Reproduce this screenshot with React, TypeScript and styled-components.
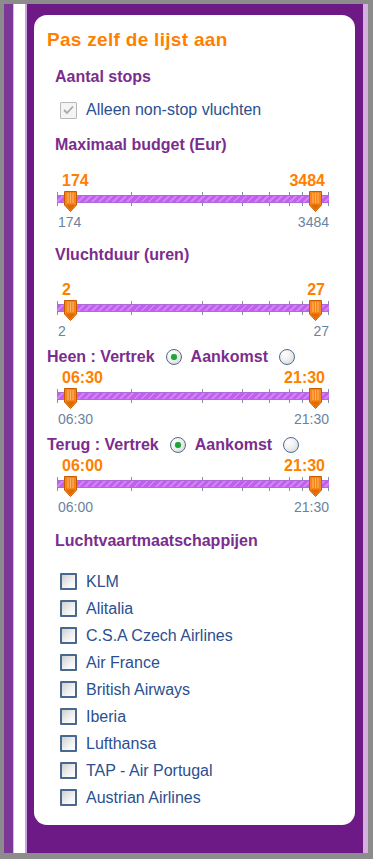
import React from "react";
import styled, { createGlobalStyle } from "styled-components";

const GlobalStyle = createGlobalStyle`
  html, body { margin: 0; padding: 0; background: #8c8c8c; }
  body { font-family: "Liberation Sans", Arial, sans-serif; }
  * { box-sizing: border-box; }
`;

const Frame = styled.div`
  display: flex;
  height: 849px;
  margin: 4px 5px 0 4px;
`;

const Rail = styled.div<{ $w: number; $c: string }>`
  flex: 0 0 ${(p) => p.$w}px;
  background: ${(p) => p.$c};
`;

const Main = styled.div`
  flex: 1;
  display: flex;
  flex-direction: column;
  background: #6e1a86;
  padding: 11px 8px 28px 7px;
`;

const Card = styled.div`
  flex: 1;
  display: flex;
  flex-direction: column;
  background: #ffffff;
  border-radius: 13px;
  padding-top: 15px;
`;

const Title = styled.h2`
  margin: 0 0 0 13px;
  font-size: 19px;
  line-height: 20px;
  font-weight: bold;
  letter-spacing: 0.3px;
  color: #ff7f00;
`;

const SectionTitle = styled.h3<{ $mt: number }>`
  margin: ${(p) => p.$mt}px 0 0 21px;
  font-size: 16px;
  line-height: 18px;
  font-weight: bold;
  color: #7b2d8e;
`;

const CheckRow = styled.label<{ $mt: number }>`
  display: flex;
  align-items: center;
  gap: 9px;
  height: 18px;
  margin: ${(p) => p.$mt}px 0 0 26px;
  font-size: 16px;
  color: #2b4f91;
`;

const Box = styled.span<{ $disabled?: boolean }>`
  flex: 0 0 17px;
  width: 17px;
  height: 17px;
  display: flex;
  align-items: center;
  justify-content: center;
  border: ${(p) => (p.$disabled ? "1px solid #b9b9b9" : "2px solid #48698d")};
  border-radius: 1px;
  background: ${(p) =>
    p.$disabled ? "#f4f4f4" : "linear-gradient(135deg, #cfcfcf 0%, #f2f2f2 60%, #ffffff 100%)"};
`;

const SliderBox = styled.div<{ $mt: number }>`
  margin: ${(p) => p.$mt}px 0 0 23px;
  width: 272px;
`;

const ValueRow = styled.div`
  display: flex;
  justify-content: space-between;
  height: 16px;
  line-height: 16px;
  padding: 0 4px 0 5px;
  font-size: 16px;
  font-weight: bold;
  color: #ff7f00;
`;

const TrackArea = styled.div`
  position: relative;
  height: 20px;
  padding-top: 6px;
`;

const Track = styled.div`
  position: relative;
  z-index: 1;
  height: 8px;
  background: repeating-linear-gradient(
    135deg,
    #c25ff1 0px,
    #c25ff1 3px,
    #d183f6 3px,
    #d183f6 5px
  );
  border-top: 1px solid #b06ad8;
  border-bottom: 1px solid #b06ad8;
`;

const Tick = styled.span<{ $left: number }>`
  position: absolute;
  top: 3px;
  left: ${(p) => p.$left}px;
  width: 1px;
  height: 14px;
  background: #7f90a4;
`;

const Handle = styled.svg<{ $left: number }>`
  position: absolute;
  z-index: 2;
  top: 2px;
  left: ${(p) => p.$left}px;
`;

const LimitRow = styled.div`
  display: flex;
  justify-content: space-between;
  margin-top: 6px;
  height: 14px;
  line-height: 14px;
  padding-left: 1px;
  font-size: 14px;
  color: #6a83a0;
`;

const RadioRow = styled.div<{ $mt: number }>`
  display: flex;
  align-items: center;
  height: 18px;
  margin: ${(p) => p.$mt}px 0 0 ${(p) => 13}px;
  font-size: 16px;
  font-weight: bold;
  color: #7b2d8e;
`;

const Radio = styled.span<{ $checked?: boolean }>`
  width: 16px;
  height: 16px;
  margin: 0 9px 0 11px;
  border-radius: 50%;
  border: 1.5px solid #4f6d8c;
  background: radial-gradient(circle at 35% 30%, #ffffff 0%, #f0f0f0 45%, #cfcfcf 100%);
  display: inline-flex;
  align-items: center;
  justify-content: center;
  &::after {
    content: "";
    display: ${(p) => (p.$checked ? "block" : "none")};
    width: 6px;
    height: 6px;
    border-radius: 50%;
    background: #22a33a;
    box-shadow: 0 0 1px #5ed26c;
  }
`;

const AirlineList = styled.ul`
  margin: 18px 0 0 26px;
  padding: 0;
  list-style: none;
`;

const Airline = styled.li`
  display: flex;
  align-items: center;
  gap: 9px;
  height: 27px;
  font-size: 16px;
  color: #2b4f91;
`;

const TICKS = [0, 74, 145, 185, 212, 232, 245, 271];

const HandleShape: React.FC<{ left: number }> = ({ left }) => (
  <Handle $left={left} width="13" height="21" viewBox="0 0 13 21">
    <path d="M0.5 0.5 H12.5 V14 L6.5 20.5 L0.5 14 Z" fill="#f5861c" stroke="#c65a00" strokeWidth="1" />
    <path d="M1.5 13.5 L6.5 19 L11.5 13.5 Z" fill="#e06a00" />
    <rect x="3.5" y="2" width="1" height="10" fill="#ffb36a" />
    <rect x="6" y="2" width="1" height="10" fill="#ffb36a" />
    <rect x="8.5" y="2" width="1" height="10" fill="#ffb36a" />
  </Handle>
);

const RangeSlider: React.FC<{ mt: number; lo: string; hi: string }> = ({ mt, lo, hi }) => (
  <SliderBox $mt={mt}>
    <ValueRow>
      <span>{lo}</span>
      <span>{hi}</span>
    </ValueRow>
    <TrackArea>
      {TICKS.map((t) => (
        <Tick key={t} $left={t} />
      ))}
      <Track />
      <HandleShape left={7} />
      <HandleShape left={252} />
    </TrackArea>
    <LimitRow>
      <span>{lo}</span>
      <span>{hi}</span>
    </LimitRow>
  </SliderBox>
);

const AIRLINES = [
  "KLM",
  "Alitalia",
  "C.S.A Czech Airlines",
  "Air France",
  "British Airways",
  "Iberia",
  "Lufthansa",
  "TAP - Air Portugal",
  "Austrian Airlines",
];

export default function App() {
  return (
    <>
      <GlobalStyle />
      <Frame>
        <Rail $w={9} $c="#7c3896" />
        <Rail $w={1} $c="#dcb6e4" />
        <Rail $w={11} $c="#ffffff" />
        <Rail $w={2} $c="#c8a4d8" />
        <Main>
          <Card>
            <Title>Pas zelf de lijst aan</Title>
            <SectionTitle $mt={18}>Aantal stops</SectionTitle>
            <CheckRow $mt={15}>
              <Box $disabled>
                <svg width="11" height="10" viewBox="0 0 11 10">
                  <path d="M1 5 L4 8 L10 1.5" fill="none" stroke="#a8a8a8" strokeWidth="1.8" />
                </svg>
              </Box>
              Alleen non-stop vluchten
            </CheckRow>
            <SectionTitle $mt={17}>Maximaal budget (Eur)</SectionTitle>
            <RangeSlider mt={19} lo="174" hi="3484" />
            <SectionTitle $mt={17}>Vluchtduur (uren)</SectionTitle>
            <RangeSlider mt={18} lo="2" hi="27" />
            <RadioRow $mt={10}>
              <span>Heen : Vertrek</span>
              <Radio $checked />
              <span>Aankomst</span>
              <Radio />
            </RadioRow>
            <RangeSlider mt={4} lo="06:30" hi="21:30" />
            <RadioRow $mt={10}>
              <span>Terug : Vertrek</span>
              <Radio $checked />
              <span>Aankomst</span>
              <Radio />
            </RadioRow>
            <RangeSlider mt={4} lo="06:00" hi="21:30" />
            <SectionTitle $mt={18}>Luchtvaartmaatschappijen</SectionTitle>
            <AirlineList>
              {AIRLINES.map((a) => (
                <Airline key={a}>
                  <Box />
                  {a}
                </Airline>
              ))}
            </AirlineList>
          </Card>
        </Main>
        <Rail $w={5} $c="#d4b0dc" />
      </Frame>
    </>
  );
}
